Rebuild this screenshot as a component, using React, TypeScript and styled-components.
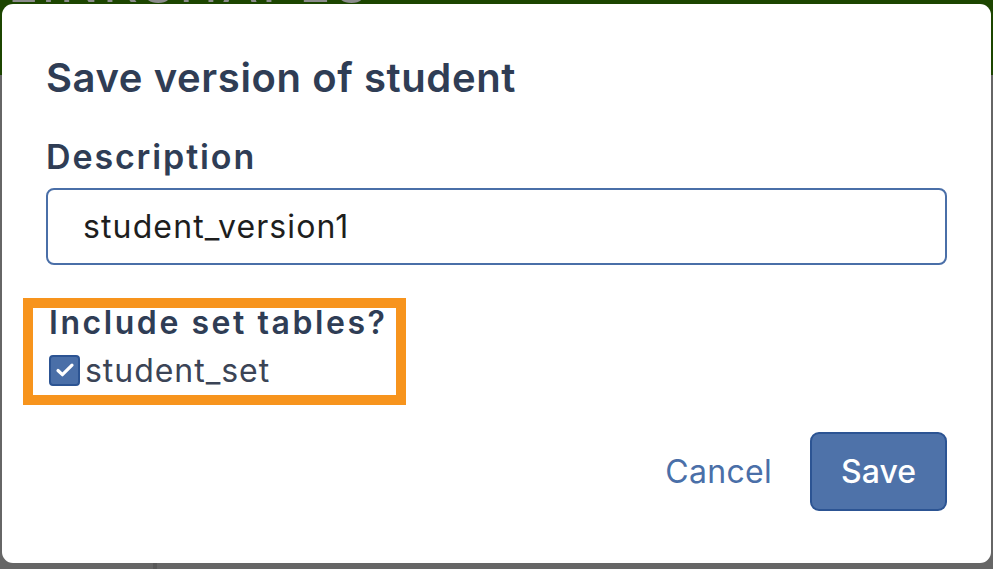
import React, { useState } from "react";
import styled, { createGlobalStyle } from "styled-components";

const colors = {
    slate: "#2f3d55",
    muted: "#3b4456",
    blue: "#4a6fa8",
    blueDark: "#2c5493",
    orange: "#f7941d",
    green: "#1c4500",
    backdrop: "#686868",
};

const GlobalStyle = createGlobalStyle`
    * {
        box-sizing: border-box;
    }
    html, body {
        margin: 0;
        padding: 0;
        height: 100%;
        overflow: hidden;
    }
    body {
        font-family: Inter, "Noto Sans", sans-serif;
        background: ${colors.backdrop};
    }
    #root {
        height: 100%;
    }
`;

const Page = styled.div`
    height: 100%;
    display: flex;
    flex-direction: column;
    background: ${colors.backdrop};
`;

const TopBar = styled.header`
    height: 75px;
    background: ${colors.green};
    overflow: hidden;
    padding-left: 8px;

    .topbar__brand {
        margin: -42px 0 0;
        font-size: 52px;
        font-weight: 400;
        letter-spacing: 0.08em;
        color: #8c8c8c;
        line-height: 1;
    }
`;

const Workspace = styled.div`
    flex: 1;
    display: grid;
    grid-template-columns: 153px 4px 153px 1fr;
    background: #666;

    span {
        background: #595959;
    }
`;

const Backdrop = styled.div`
    position: fixed;
    inset: 0;
    padding: 4px 2px 0;
`;

const Modal = styled.div`
    width: 989px;
    height: 559px;
    background: #ffffff;
    border-radius: 11px;
    padding: 50px 44px 0;
    display: flex;
    flex-direction: column;
`;

const Title = styled.h2`
    margin: 0;
    font-size: 40px;
    line-height: 48px;
    font-weight: 600;
    letter-spacing: 0.015em;
    color: ${colors.slate};
`;

const Label = styled.label`
    display: block;
    margin-top: 35px;
    font-size: 34px;
    line-height: 40px;
    font-weight: 600;
    letter-spacing: 0.055em;
    color: ${colors.slate};
`;

const TextInput = styled.input`
    margin-top: 11px;
    width: 100%;
    height: 77px;
    border: 2px solid ${colors.blue};
    border-radius: 8px;
    padding: 0 35px;
    font-family: Inter, "Noto Sans", sans-serif;
    font-size: 32px;
    letter-spacing: 0.035em;
    color: #1e1e1e;
    outline: none;
`;

const SetSection = styled.fieldset`
    margin: 43px 0 0 -13px;
    width: 363px;
    border: 0;
    padding: 0 8px 10px 16px;
    outline: 10px solid ${colors.orange};
    display: flex;
    flex-direction: column;
    gap: 17px;
`;

const SectionHeading = styled.h3`
    margin: 0;
    font-size: 32px;
    line-height: 30px;
    font-weight: 600;
    letter-spacing: 0.08em;
    color: ${colors.slate};
    white-space: nowrap;
`;

const CheckRow = styled.label`
    display: flex;
    align-items: center;
    gap: 5px;
    height: 30px;
    font-size: 32px;
    letter-spacing: 0.03em;
    color: ${colors.muted};
    cursor: pointer;

    input {
        display: none;
    }
`;

const Box = styled.span<{ $checked: boolean }>`
    width: 31px;
    height: 31px;
    flex: none;
    border-radius: 4px;
    border: 2px solid ${(p) => (p.$checked ? colors.blueDark : "#8a94a6")};
    background: ${(p) => (p.$checked ? colors.blue : "#fff")};
    display: flex;
    align-items: center;
    justify-content: center;
`;

const Footer = styled.div`
    margin-top: 37px;
    display: flex;
    justify-content: flex-end;
    align-items: center;
    gap: 38px;
`;

const Button = styled.button<{ $primary?: boolean }>`
    height: 79px;
    padding: ${(p) => (p.$primary ? "0 29px" : "0")};
    border-radius: 9px;
    border: ${(p) => (p.$primary ? `2px solid ${colors.blueDark}` : "0")};
    background: ${(p) => (p.$primary ? "#4e72a9" : "transparent")};
    color: ${(p) => (p.$primary ? "#ffffff" : colors.blue)};
    font-family: Inter, "Noto Sans", sans-serif;
    font-size: 32px;
    font-weight: ${(p) => (p.$primary ? 500 : 400)};
    letter-spacing: ${(p) => (p.$primary ? "0" : "0.01em")};
    cursor: pointer;
`;

const Check = () => (
    <svg width="24" height="24" viewBox="0 0 24 24" fill="none">
        <path
            d="M5 12.5l4.4 4.2L19 7.2"
            stroke="#fff"
            strokeWidth="3.2"
            strokeLinecap="round"
            strokeLinejoin="round"
        />
    </svg>
);

const App = () => {
    const [description, setDescription] = useState("student_version1");
    const [includeSet, setIncludeSet] = useState(true);

    return (
        <>
            <GlobalStyle />
            <Page>
                <TopBar>
                    <p className="topbar__brand">LINKSHAPES</p>
                </TopBar>
                <Workspace>
                    <div />
                    <span />
                    <div />
                    <div />
                </Workspace>
            </Page>
            <Backdrop>
                <Modal role="dialog">
                    <Title>Save version of student</Title>
                    <Label htmlFor="version-description">Description</Label>
                    <TextInput
                        id="version-description"
                        value={description}
                        onChange={(e) => setDescription(e.target.value)}
                    />
                    <SetSection>
                        <SectionHeading>Include set tables?</SectionHeading>
                        <CheckRow>
                            <input
                                type="checkbox"
                                checked={includeSet}
                                onChange={(e) => setIncludeSet(e.target.checked)}
                            />
                            <Box $checked={includeSet}>{includeSet && <Check />}</Box>
                            student_set
                        </CheckRow>
                    </SetSection>
                    <Footer>
                        <Button>Cancel</Button>
                        <Button $primary>Save</Button>
                    </Footer>
                </Modal>
            </Backdrop>
        </>
    );
};

export default App;
